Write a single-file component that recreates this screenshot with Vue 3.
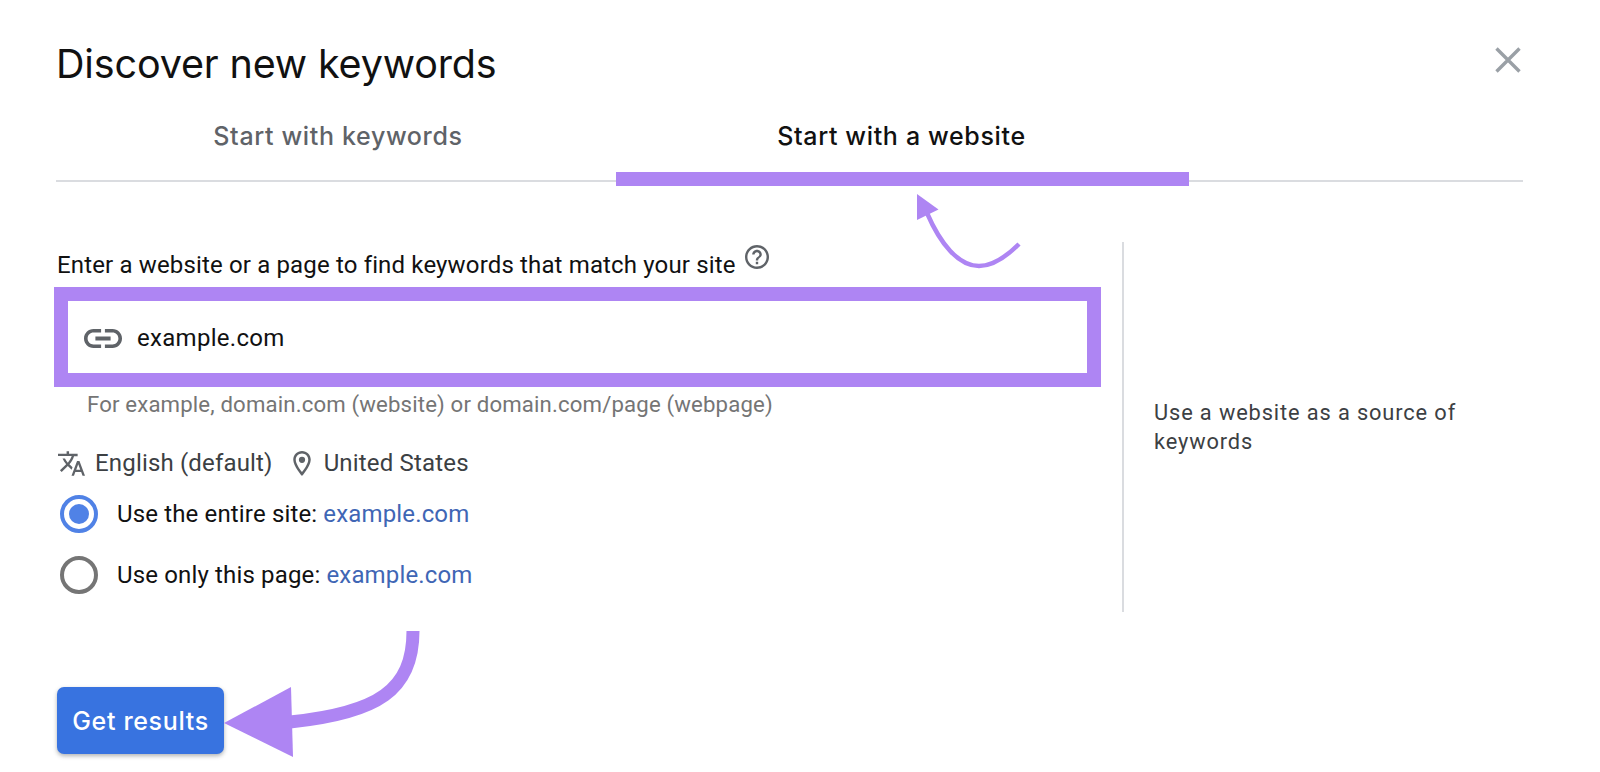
<script setup>
const site = 'example.com'
</script>

<template>
  <div class="page">
    <header class="head">
      <h1>Discover new keywords</h1>
      <svg class="close" viewBox="0 0 26 26"><path d="M1.5 1.5L24.5 24.5M24.5 1.5L1.5 24.5" /></svg>
    </header>

    <nav class="tabs">
      <div class="tab">Start with keywords</div>
      <div class="tab active">Start with a website</div>
    </nav>

    <main class="body">
      <section class="form">
        <div class="label">
          <span>Enter a website or a page to find keywords that match your site</span>
          <svg class="help" viewBox="2 2 20 20"><path d="M11 18h2v-2h-2v2zm1-16C6.48 2 2 6.48 2 12s4.48 10 10 10 10-4.48 10-10S17.52 2 12 2zm0 18c-4.41 0-8-3.59-8-8s3.59-8 8-8 8 3.59 8 8-3.59 8-8 8zm0-14c-2.21 0-4 1.79-4 4h2c0-1.1.9-2 2-2s2 .9 2 2c0 2-3 1.75-3 5h2c0-2.25 3-2.5 3-5 0-2.21-1.79-4-4-4z" /></svg>
        </div>

        <div class="field">
          <svg class="link" viewBox="2 7 20 10"><path d="M3.9 12c0-1.71 1.39-3.1 3.1-3.1h4V7H7c-2.76 0-5 2.24-5 5s2.24 5 5 5h4v-1.9H7c-1.71 0-3.1-1.39-3.1-3.1zM8 13h8v-2H8v2zm9-6h-4v1.9h4c1.71 0 3.1 1.39 3.1 3.1s-1.39 3.1-3.1 3.1h-4V17h4c2.76 0 5-2.24 5-5s-2.24-5-5-5z" /></svg>
          <span>{{ site }}</span>
        </div>

        <p class="hint">For example, domain.com (website) or domain.com/page (webpage)</p>

        <div class="locale">
          <svg class="translate" viewBox="1 2 22 20"><path d="M12.87 15.07l-2.54-2.51.03-.03c1.74-1.94 2.98-4.17 3.71-6.53H17V4h-7V2H8v2H1v1.99h11.17C11.5 7.92 10.44 9.75 9 11.35 8.07 10.32 7.3 9.19 6.69 8h-2c.73 1.63 1.73 3.17 2.98 4.56l-5.09 5.02L4 19l5-5 3.11 3.11.76-2.04zM18.5 10h-2L12 22h2l1.12-3h4.75L21 22h2l-4.5-12zm-2.62 7l1.62-4.33L19.12 17h-3.24z" /></svg>
          <span>English (default)</span>
          <svg class="pin" viewBox="5 2 14 20"><path d="M12 2C8.13 2 5 5.13 5 9c0 5.25 7 13 7 13s7-7.75 7-13c0-3.87-3.13-7-7-7zM7 9c0-2.76 2.24-5 5-5s5 2.24 5 5c0 2.88-2.88 7.19-5 9.88C9.92 16.21 7 11.85 7 9z" /><circle cx="12" cy="9" r="2.5" /></svg>
          <span>United States</span>
        </div>

        <div class="radio-row first">
          <span class="radio on"><i></i></span>
          <span>Use the entire site: <a>{{ site }}</a></span>
        </div>
        <div class="radio-row">
          <span class="radio"></span>
          <span>Use only this page: <a>{{ site }}</a></span>
        </div>
      </section>

      <aside class="side">Use a website as a source of keywords</aside>
    </main>

    <button class="cta">Get results</button>

    <svg class="notes" viewBox="0 0 1600 772">
      <path class="thin" d="M1019 244C1004 259 992 266 979 266C958 266 940 243 927 213" />
      <path class="fill" d="M917 194L938.500 209.500L917 220Z" />
      <path class="thick" d="M413 631C413 690 378 713 290 722" />
      <path class="fill" d="M224 723L291 687L293 757Z" />
    </svg>
  </div>
</template>

<style scoped>
.page {
  position: relative;
  width: 1600px;
  height: 772px;
  overflow: hidden;
  box-sizing: border-box;
  padding: 0 77px 0 56px;
  background: #fff;
  color: #202124;
  font-family: Roboto, "Liberation Sans", sans-serif;
}
.head {
  display: flex;
  justify-content: space-between;
  align-items: flex-start;
  height: 112px;
}
h1 {
  margin: 40px 0 0;
  font-family: Inter, Roboto, sans-serif;
  font-size: 39.500px;
  line-height: 48px;
  font-weight: 400;
  color: #111;
  letter-spacing: -0.15px;
}
.close { width: 26px; height: 26px; margin: 47px 2px 0 0; }
.close path { stroke: #9aa0a6; stroke-width: 3.4; fill: none; }

.tabs {
  display: grid;
  grid-template-columns: 560px 573px;
  height: 70px;
  border-bottom: 2px solid #dadce0;
  box-sizing: border-box;
}
.tab {
  height: 60px;
  box-sizing: border-box;
  padding: 9px 0 0 4px;
  text-align: center;
  font-family: Inter, Roboto, sans-serif;
  font-size: 25px;
  line-height: 30px;
  font-weight: 500;
  color: #5f6368;
  letter-spacing: 0.65px;
}
.tab.active {
  height: 74px;
  padding: 9px 2px 0 0;
  color: #111;
  border-bottom: 14px solid #ae85f3;
}

.body {
  display: grid;
  grid-template-columns: 1068px 1fr;
  height: 370px;
  margin-top: 60px;
}
.form {
  border-right: 2px solid #dadce0;
  font-size: 24px;
  color: #111;
}
.label {
  display: flex;
  align-items: flex-start;
  height: 45px;
  padding-left: 1px;
  padding-top: 7px;
  box-sizing: border-box;
  line-height: 32px;
  letter-spacing: 0.15px;
}
.help { width: 24px; height: 24px; margin: -4px 0 0 9px; fill: #5f6368; }

.field {
  box-sizing: border-box;
  width: 1047px;
  height: 100px;
  margin-left: -2px;
  display: flex;
  align-items: center;
  padding: 2px 0 0 16px;
  border: 14px solid #ae85f3;
  background: #fff;
  font-size: 24px;
  letter-spacing: 0.3px;
}
.link { width: 38px; height: 19px; margin-right: 15px; fill: #5f6368; }

.hint {
  margin: 3px 0 0 31px;
  font-size: 22.200px;
  line-height: 28px;
  color: #757575;
  letter-spacing: 0.15px;
}
.locale {
  display: flex;
  align-items: center;
  height: 32px;
  margin-top: 29px;
  padding-left: 2px;
  color: #3c4043;
  letter-spacing: 0.17px;
}
.locale svg { fill: #5f6368; }
.translate { width: 27px; height: 25px; margin-right: 10px; }
.pin { width: 18px; height: 25px; margin: 0 13px 0 20px; }

.radio-row {
  display: flex;
  align-items: center;
  gap: 19px;
  height: 38px;
  margin-top: 23px;
  padding-left: 4px;
  letter-spacing: 0.15px;
}
.radio-row.first { margin-top: 16px; }
.radio {
  box-sizing: border-box;
  width: 38px;
  height: 38px;
  border: 4px solid #757575;
  border-radius: 50%;
  display: flex;
  align-items: center;
  justify-content: center;
}
.radio.on { border-color: #5082e6; }
.radio i {
  width: 20px;
  height: 20px;
  border-radius: 50%;
  background: #5082e6;
}
a { color: #3f66b5; }

.side {
  padding: 156px 60px 0 30px;
  font-size: 21.800px;
  line-height: 29px;
  color: #3c4043;
  letter-spacing: 0.88px;
}

.cta {
  display: block;
  width: 167px;
  height: 67px;
  margin: 75px 0 0 1px;
  padding: 0;
  border: 0;
  border-radius: 7px;
  background: #3873e0;
  box-shadow: 0 2px 4px rgba(60, 64, 67, 0.4);
  color: #fff;
  font-family: Inter, Roboto, sans-serif;
  font-size: 25px;
  font-weight: 500;
  letter-spacing: 0.65px;
}

.notes {
  position: absolute;
  inset: 0;
  width: 1600px;
  height: 772px;
  pointer-events: none;
}
.thin { fill: none; stroke: #ae85f3; stroke-width: 4.5; }
.thick { fill: none; stroke: #ae85f3; stroke-width: 13; }
.fill { fill: #ae85f3; }
</style>
